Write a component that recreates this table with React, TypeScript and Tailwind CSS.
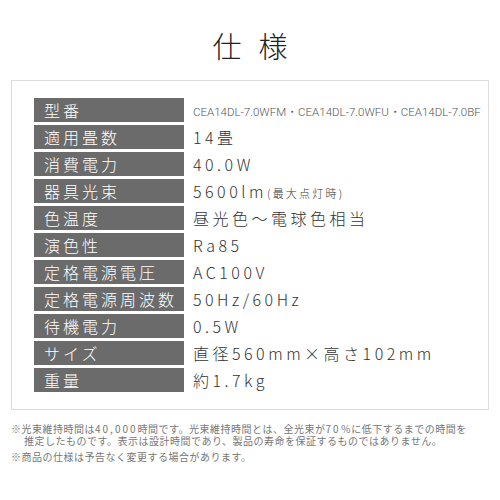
const rows: { label: string; value: React.ReactNode }[] = [
  {
    label: "型番",
    value: (
      <span className="font-['Roboto',sans-serif] text-[11.5px] font-light tracking-[0px] text-[#555]">
        CEA14DL-7.0WFM・CEA14DL-7.0WFU・CEA14DL-7.0BF
      </span>
    ),
  },
  { label: "適用畳数", value: "14畳" },
  { label: "消費電力", value: "40.0W" },
  {
    label: "器具光束",
    value: (
      <>
        5600lm<span className="text-[11px] tracking-[2.2px]">(最大点灯時)</span>
      </>
    ),
  },
  { label: "色温度", value: "昼光色～電球色相当" },
  { label: "演色性", value: "Ra85" },
  { label: "定格電源電圧", value: "AC100V" },
  { label: "定格電源周波数", value: "50Hz/60Hz" },
  { label: "待機電力", value: "0.5W" },
  { label: "サイズ", value: "直径560mm×高さ102mm" },
  { label: "重量", value: "約1.7kg" },
];

export default function App() {
  return (
    <div className="h-[500px] w-[500px] bg-white font-['Noto_Sans_CJK_JP',sans-serif] text-[#333]">
      <h1 className="flex h-[80px] items-center justify-center pt-[10px] text-[29px] font-light leading-none tracking-[17px] text-[#222]">
        <span className="pl-[17px]">仕様</span>
      </h1>

      <div className="mx-[11px] h-[330px] border border-[#dcdcdc] pl-[22px] pt-[17px]">
        <div className="flex flex-col gap-[3px]">
          {rows.map((r) => (
            <div key={r.label} className="flex h-[24px] items-center">
              <div className="flex h-full w-[150px] items-center bg-[#6b6b6b] pl-[10px] text-[16px] font-light leading-none tracking-[3px] text-white">
                {r.label}
              </div>
              <div className="pl-[9px] text-[16px] font-light leading-none tracking-[3.5px] text-[#333]">
                {r.value}
              </div>
            </div>
          ))}
        </div>
      </div>

      <div className="mt-[13px] pl-[11px] text-[10px] leading-[12px] tracking-[0.5px] text-[#777]">
        <p>
          ※光束維持時間は<span className="tracking-[2px]">40,000</span>時間です。光束維持時間とは、全光束が
          <span className="tracking-[2px]">70</span>％に低下するまでの時間を
        </p>
        <p className="pl-[13px]">推定したものです。表示は設計時間であり、製品の寿命を保証するものではありません。</p>
        <p className="mt-[4px]">※商品の仕様は予告なく変更する場合があります。</p>
      </div>
    </div>
  );
}
